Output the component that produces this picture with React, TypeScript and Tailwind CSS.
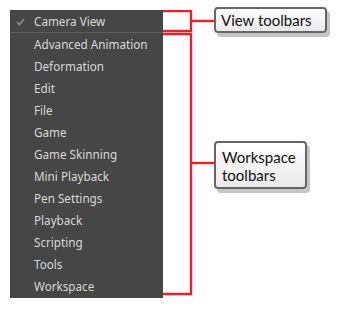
const items = [
  'Advanced Animation',
  'Deformation',
  'Edit',
  'File',
  'Game',
  'Game Skinning',
  'Mini Playback',
  'Pen Settings',
  'Playback',
  'Scripting',
  'Tools',
  'Workspace',
];

function Check() {
  return (
    <svg width="9" height="8" viewBox="0 0 9 8" className="absolute left-[6px] top-[8px]">
      <path d="M1 4.2 L3.4 6.6 L8 1.2" fill="none" stroke="#8c8c8c" strokeWidth="1.7" />
    </svg>
  );
}

function Callout({ className, children }: { className: string; children: React.ReactNode }) {
  return (
    <div
      className={`absolute left-[51px] rounded-[4px] border-2 border-[#666666] bg-gradient-to-b from-white to-[#e9e9e9] text-[15px] leading-[18px] text-[#111] shadow-[3px_4px_0_#c4c4c4] ${className}`}
      style={{ fontFamily: 'Lato, "Open Sans", sans-serif' }}
    >
      {children}
    </div>
  );
}

export default function App() {
  return (
    <div className="flex h-[309px] w-[341px] bg-white pl-[10px] pt-[10px]">
      <div
        className="flex h-[288px] w-[153px] flex-col bg-[#464646] text-[11.7px] text-[#d8d8d8]"
        style={{ fontFamily: '"Noto Sans", "Open Sans", sans-serif' }}
      >
        <div className="relative flex h-[22px] items-center pl-[24px] pt-[2px]">
          <Check />
          Camera View
        </div>
        <div className="h-px bg-[#5c5c5c]" />
        {items.map((item) => (
          <div key={item} className="flex h-[22px] items-center pl-[24px] pt-[2px]">
            {item}
          </div>
        ))}
      </div>
      <div className="relative h-[288px] w-[178px]">
        <svg width="60" height="290" className="absolute left-0 top-0" fill="none" stroke="#e3242b" strokeWidth="2.4">
          <path d="M0 1 H28 V21 H0" />
          <path d="M28 11 H51" />
          <path d="M0 24 H28 V284 H0" />
          <path d="M28 153 H51" />
        </svg>
        <Callout className="top-[-3px] flex h-[26px] w-[113px] items-center pl-[5px]">View toolbars</Callout>
        <Callout className="top-[131px] h-[48px] w-[93px] px-[6px] pt-[5px]">
          Workspace
          <br />
          toolbars
        </Callout>
      </div>
    </div>
  );
}
